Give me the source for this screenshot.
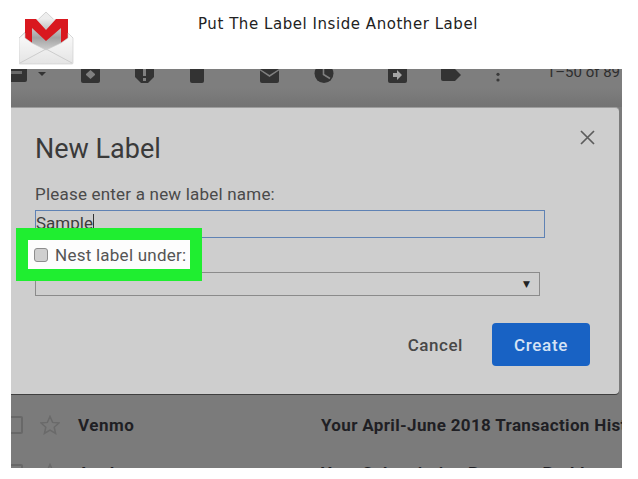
<div class="page">
  <header class="head">
    <svg class="logo" width="56" height="56" viewBox="0 0 56 56">
      <defs>
        <linearGradient id="env" x1="0" y1="0" x2="0" y2="1"><stop offset="0" stop-color="#fbfbfb"/><stop offset="1" stop-color="#e4e4e4"/></linearGradient>
        <linearGradient id="fold" x1="0" y1="0" x2="0" y2="1"><stop offset="0" stop-color="#ececec"/><stop offset=".55" stop-color="#a2a2a2"/><stop offset="1" stop-color="#d8d8d8"/></linearGradient>
      </defs>
      <path d="M0 27 L27 1 L54 27 Z" fill="#ededed" stroke="#c4c4c4" stroke-width=".7"/>
      <path d="M6 8 H49 V34 L27 42 L6 34 Z" fill="url(#fold)"/>
      <path d="M6 8 H17 L27 19 L37 8 H49 V27 L42 32 V17 L27 30 L13 17 V32 L6 27 Z" fill="#d9181f"/>
      <path d="M0 27 L6 22 V27 L13 32 L27 39 L42 32 L49 27 V22 L54 27 V52 Q54 53 53 53 H1 Q0 53 0 52 Z" fill="url(#env)" stroke="#cbcbcb" stroke-width=".6"/>
      <path d="M1 52 L27 38 L53 52" fill="none" stroke="#cdcdcd" stroke-width="1"/>
    </svg>
    <h1>Put The Label Inside Another Label</h1>
  </header>

  <main class="shot">
    <div class="toolbar">
      <svg width="611" height="20" viewBox="0 0 611 20" class="tools">
        <g fill="#333">
          <path d="M0 0 H16 V11 Q16 13 14 13 H0 Z"/>
          <path d="M27 3 H35 L31 7 Z"/>
          <path d="M70 0 H89 V12 Q89 14 87 14 H72 Q70 14 70 12 Z"/>
          <path d="M124 0 H143 V8 L137 14 H130 L124 8 Z"/>
          <path d="M179 0 H193 V12 Q193 14 191 14 H181 Q179 14 179 12 Z"/>
          <path d="M249 0 H268 V12 Q268 14 266 14 H251 Q249 14 249 12 Z"/>
          <circle cx="313" cy="4.5" r="9.5"/>
          <path d="M377 0 H396 V12 Q396 14 394 14 H379 Q377 14 377 12 Z"/>
          <path d="M430 0 H444 L450 6 L444 12 H432 Q430 12 430 10 Z"/>
          <circle cx="487" cy="5.3" r="1.6" fill="#3a3a3a"/>
          <circle cx="487" cy="11" r="1.6" fill="#3a3a3a"/>
        </g>
        <g fill="#808080">
          <path d="M75 5 L79.5 1 L84 5 V6 L79.5 10 L75 6 Z"/>
          <rect x="132" y="0" width="3" height="7"/>
          <rect x="132" y="9" width="3" height="3"/>
          <path d="M249 0 L258.5 6 L268 0 V1.5 L258.5 8 L249 1.5 Z"/>
          <path d="M382 4 H386 V1 L391 6 L386 11 V8 H382 Z" fill="#a5a5a5"/>
          <path d="M0 2 H11 V5 H0 Z" fill="#6a6a6a"/>
        </g>
        <path d="M312.5 0 V5.5 L319 9.5" fill="none" stroke="#808080" stroke-width="1.6"/>
      </svg>
      <span class="count">1–50 of 89</span>
    </div>

    <section class="modal">
      <div class="title-row">
        <h2>New Label</h2>
        <svg class="close" width="15" height="15" viewBox="0 0 15 15"><path d="M1 1 L14 14 M14 1 L1 14" stroke="#5c5c5c" stroke-width="1.7" fill="none"/></svg>
      </div>
      <p class="prompt">Please enter a new label name:</p>
      <div class="input"><span>Sample</span><i class="caret"></i></div>
      <div class="select"><span class="arrow">▼</span></div>
      <div class="actions">
        <span class="cancel">Cancel</span>
        <span class="create">Create</span>
      </div>
      <div class="callout">
        <div class="callout-in">
          <span class="check"></span>
          <span>Nest label under:</span>
        </div>
      </div>
    </section>

    <div class="row first">
      <span class="box"></span>
      <svg class="star" width="20" height="20" viewBox="0 0 20 20"><path d="M10 1.5 L12.6 7.4 L19 8 L14.2 12.2 L15.6 18.5 L10 15.2 L4.4 18.5 L5.8 12.2 L1 8 L7.4 7.4 Z" fill="none" stroke="#6a6a6a" stroke-width="1.5"/></svg>
      <b class="from">Venmo</b>
      <b class="subj">Your April-June 2018 Transaction History</b>
    </div>
    <div class="row">
      <span class="box"></span>
      <svg class="star" width="20" height="20" viewBox="0 0 20 20"><path d="M10 1.5 L12.6 7.4 L19 8 L14.2 12.2 L15.6 18.5 L10 15.2 L4.4 18.5 L5.8 12.2 L1 8 L7.4 7.4 Z" fill="none" stroke="#6a6a6a" stroke-width="1.5"/></svg>
      <b class="from">Apple</b>
      <b class="subj">Your Subscription Payment Problem</b>
    </div>
  </main>
</div>

<style>
  :global(body) { margin: 0; background: #fff; }
  .page { width: 638px; height: 479px; overflow: hidden; position: relative; font-family: "Roboto", "Liberation Sans", sans-serif; }
  .head { height: 69px; display: flex; position: relative; }
  .logo { margin: 11px 0 0 19px; flex: none; }
  h1 { margin: 15px 0 0 123px; font: 400 15px/18px "DejaVu Sans", sans-serif; color: #222; letter-spacing: 0.55px; white-space: nowrap; }
  .shot { width: 611px; height: 399px; margin-left: 11px; background: #7b7b7b; overflow: hidden; position: relative; }
  .toolbar { height: 38px; position: relative; background: linear-gradient(#7e7e7e 0 50%, #737373); }
  .tools { display: block; filter: blur(0.5px); }
  .count { position: absolute; right: 2px; top: -6px; font-size: 15px; line-height: 18px; color: #2e2e2e; }
  .modal { width: 608px; height: 287px; box-sizing: border-box; padding: 0 24px; background: #cecece; border-top: 1px solid #9d9d9d; border-radius: 0 4px 4px 0; box-shadow: 0 1px 0 #3f3f3f; position: relative; }
  .title-row { display: flex; justify-content: space-between; align-items: center; height: 76px; }
  h2 { margin: 0; font-size: 27px; font-weight: 400; color: #3a3a3a; position: relative; top: 3px; }
  .close { margin: 0 -1px 17px 0; transform: translateX(-1px); }
  .prompt { margin: 0; font-size: 17px; line-height: 20px; color: #4a4a4a; letter-spacing: 0.2px; }
  .input { width: 510px; height: 28px; margin-top: 6px; box-sizing: border-box; border: 1px solid #5f82b4; padding: 2px 0 0 0; font-size: 17px; line-height: 20px; color: #3c3c3c; display: flex; }
  .caret { width: 1px; height: 18px; background: #333; margin-top: 1px; }
  .select { width: 505px; height: 24px; margin-top: 34px; box-sizing: border-box; border: 1px solid #8b8b8b; display: flex; justify-content: flex-end; align-items: center; padding-right: 9px; }
  .arrow { font-size: 9px; color: #222; font-family: "DejaVu Sans", sans-serif; }
  .actions { display: flex; justify-content: flex-end; align-items: center; margin-top: 27px; width: 555px; gap: 29px; }
  .cancel { font-size: 17px; font-weight: 500; color: #484848; letter-spacing: 0.55px; }
  .create { width: 98px; height: 43px; border-radius: 4px; background: #1862c4; color: #d5e3f5; font-size: 17px; font-weight: 500; display: flex; align-items: center; justify-content: center; letter-spacing: 0.7px; }
  .callout { position: absolute; left: 5px; top: 120px; width: 186px; height: 53px; box-sizing: border-box; padding: 12px; background: #1fee30; }
  .callout-in { height: 100%; background: #fdfdfd; display: flex; align-items: center; gap: 7px; padding-left: 6px; box-sizing: border-box; font-size: 17px; color: #555; letter-spacing: 0.25px; }
  .check { width: 12px; height: 12px; background: #cfcfcf; border: 1px solid #8d8d8d; border-radius: 3px; flex: none; }
  .row { height: 48px; display: flex; align-items: center; position: relative; font-size: 17px; color: #1f1f24; white-space: nowrap; }
  .row.first { margin-top: 7px; }
  .box { width: 14px; height: 14px; margin-left: -6px; border: 2px solid #686868; border-radius: 2px; flex: none; }
  .star { margin-left: 17px; flex: none; }
  .from { margin-left: 18px; width: 243px; flex: none; letter-spacing: 0.5px; }
  .subj { letter-spacing: 0.35px; }
</style>
